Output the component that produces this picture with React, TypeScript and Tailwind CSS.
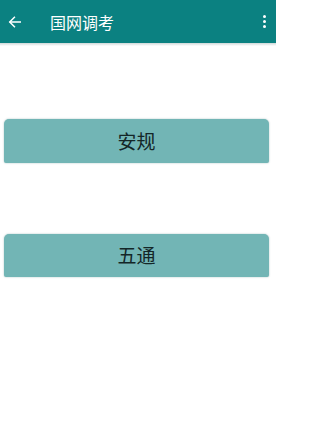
import React from "react";

export default function App() {
  const font = { fontFamily: '"Noto Sans CJK SC", "Noto Sans", sans-serif' };
  return (
    <div className="w-[276px] h-[424px] bg-white flex flex-col" style={font}>
      <div className="h-[43px] bg-[#0b8181] flex items-center shrink-0">
        <div className="w-[28px] flex justify-center ml-[1px]">
          <svg width="14" height="14" viewBox="0 0 24 24" fill="none" stroke="white" strokeWidth="2.6" strokeLinecap="square">
            <path d="M21 12H4" />
            <path d="M11 4l-8 8 8 8" />
          </svg>
        </div>
        <div className="ml-[21px] text-white text-[16px] leading-none">国网调考</div>
        <div className="ml-auto mr-[10px] flex flex-col gap-[2px]">
          <div className="w-[3px] h-[3px] bg-white rounded-full" />
          <div className="w-[3px] h-[3px] bg-white rounded-full" />
          <div className="w-[3px] h-[3px] bg-white rounded-full" />
        </div>
      </div>
      <div className="h-[3px] bg-gradient-to-b from-[#cfd8d8] to-white shrink-0" />
      <div className="flex flex-col px-[4px] pt-[73px] gap-[71px]">
        <div className="h-[44px] w-[265px] bg-[#72b5b5] rounded-t-[5px] rounded-b-[2px] shadow-[0_0_2px_rgba(0,80,80,0.35)] flex items-center justify-center text-[19px] text-[#142627]">
          安规
        </div>
        <div className="h-[43px] w-[265px] bg-[#72b5b5] rounded-t-[5px] rounded-b-[2px] shadow-[0_0_2px_rgba(0,80,80,0.35)] flex items-center justify-center text-[19px] text-[#142627]">
          五通
        </div>
      </div>
    </div>
  );
}
